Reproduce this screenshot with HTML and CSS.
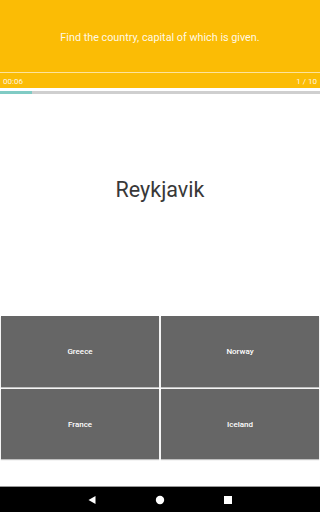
FILE: index.html
```html
<!DOCTYPE html>
<html>
<head>
<meta charset="utf-8">
<link rel="stylesheet" href="styles.css">
</head>
<body>
<div class="screen">
  <header class="header">
    <div class="prompt">Find the country, capital of which is given.</div>
    <div class="status"><span>00:06</span><span>1 / 10</span></div>
  </header>
  <div class="progress"><div class="fill" style="width:32px"></div></div>
  <main class="question">Reykjavik</main>
  <div class="answers">
    <div class="answer">Greece</div>
    <div class="answer">Norway</div>
    <div class="answer">France</div>
    <div class="answer">Iceland</div>
  </div>
  <div class="spacer"></div>
  <nav class="navbar">
    <svg class="nav-icon" width="10" height="10" viewBox="0 0 10 10"><polygon points="8.5,1 8.5,9 1.5,5" fill="#fff"/></svg>
    <svg class="nav-icon" width="10" height="10" viewBox="0 0 10 10"><circle cx="5" cy="5" r="4.2" fill="#fff"/></svg>
    <svg class="nav-icon" width="10" height="10" viewBox="0 0 10 10"><rect x="1" y="1" width="8" height="8" fill="#fff"/></svg>
  </nav>
</div>
</body>
</html>
```

FILE: styles.css
```css
* { box-sizing: border-box; }
html, body { margin: 0; padding: 0; }
body { font-family: Roboto, "Noto Sans", sans-serif; background: #fff; }
.screen { width: 320px; height: 512px; display: flex; flex-direction: column; }
.header { height: 88px; background: #fbbc05; display: flex; flex-direction: column; color: #fff; }
.prompt { height: 73px; display: flex; align-items: center; justify-content: center; font-size: 10.8px; color: rgba(255,255,255,0.92); border-bottom: 1px solid rgba(255,255,255,0.6); padding-top: 2px; }
.status { flex: 1; display: flex; justify-content: space-between; align-items: center; padding: 1px 3px 0; font-size: 8px; color: rgba(255,255,255,0.9); }
.progress { margin-top: 3px; height: 3px; background: #cfcfcf; }
.fill { height: 100%; background: #80cbc4; }
.question { flex: 1; display: flex; justify-content: center; align-items: flex-start; padding-top: 83px; font-size: 21.5px; color: #383838; }
.answers { display: grid; grid-template-columns: 1fr 1fr; grid-template-rows: 71px 70px; gap: 2px; padding: 1px; }
.answer { background: #666; color: #fff; font-size: 8px; font-weight: 500; display: flex; align-items: center; justify-content: center; box-shadow: 0 1px 1px rgba(0,0,0,0.25); }
.spacer { height: 26px; }
.navbar { height: 26px; background: #000; border-top: 1px solid #999; display: flex; justify-content: center; align-items: center; gap: 58px; }
.nav-icon { display: block; }
```
